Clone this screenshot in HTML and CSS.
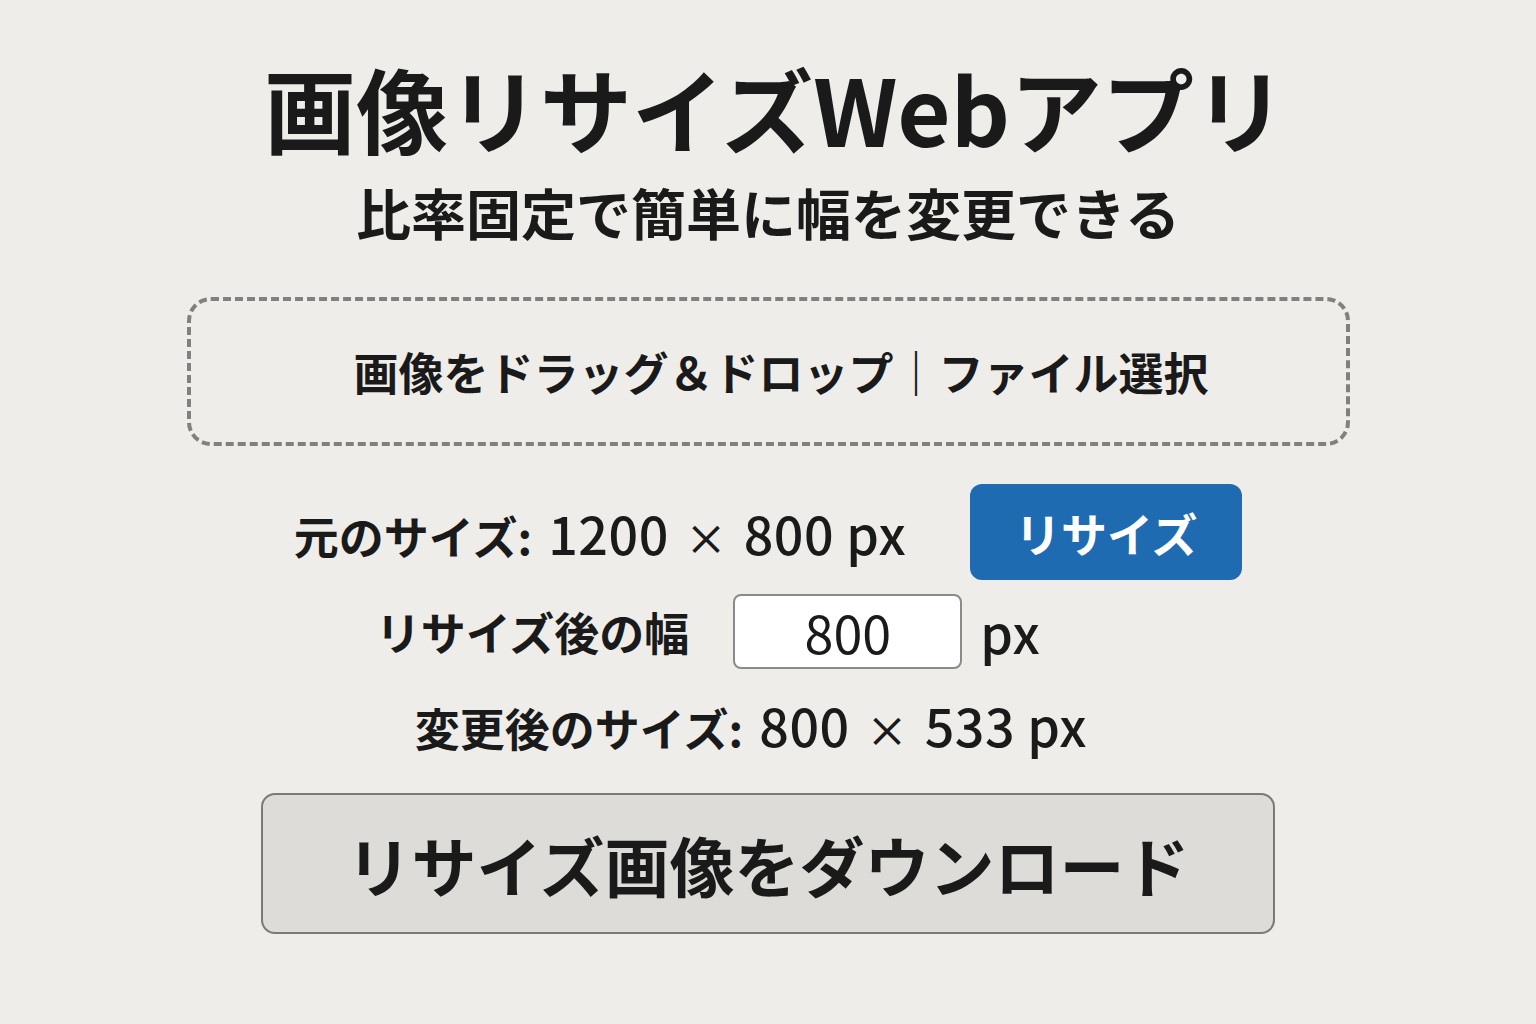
FILE: index.html
```html
<!DOCTYPE html>
<html lang="ja">
<head>
	<meta charset="utf-8"/>
	<title>画像リサイズWebアプリ</title>
	<link rel="stylesheet" href="styles.css">
</head>
<body>
	<div class="page">
		<h1 class="title">画像リサイズWebアプリ</h1>
		<p class="sub">比率固定で簡単に幅を変更できる</p>
		<div class="drop">画像をドラッグ＆ドロップ｜ファイル選択</div>
		<div class="row row1">
			<span class="txt">元のサイズ: <span class="n">1200 <span class="x">×</span> 800 px</span></span>
			<button class="btn-blue">リサイズ</button>
		</div>
		<div class="row row2">
			<label class="txt">リサイズ後の幅</label>
			<input class="num" type="text" value="800">
			<span class="txt n">px</span>
		</div>
		<div class="row row3">
			<span class="txt">変更後のサイズ: <span class="n">800 <span class="x">×</span> 533 px</span></span>
		</div>
		<button class="btn-dl">リサイズ画像をダウンロード</button>
	</div>
</body>
</html>
```

FILE: styles.css
```css
html, body{height: 100%;}
body{margin: 0;background-color: #eeede9;color: #1a1a1a;font-family: "Noto Sans CJK JP", "Noto Sans", sans-serif;}
.page{width: 1163px;margin: 0 auto;padding-top: 61px;display: flex;flex-direction: column;align-items: center;}
.title{margin: 0 0 0 14px;font-size: 92px;line-height: 91px;font-weight: 700;}
.sub{margin: 32px 0 0;font-size: 55px;line-height: 54px;font-weight: 700;}
.drop{margin-top: 59px;width: 100%;height: 149px;box-sizing: border-box;border: 4px dashed #80807e;border-radius: 24px;padding-left: 26px;
	display: flex;align-items: center;justify-content: center;font-size: 45px;font-weight: 700;}
.row{display: flex;align-items: center;justify-content: center;}
.txt{font-size: 45px;font-weight: 700;}
.n{font-size: 52px;font-weight: 500;margin-left: 6px;letter-spacing: 0.5px;}
.x{font-size: 42px;margin: 0 4px;}
.row1{margin-top: 38px;}
.row1 > .txt{margin-right: 64px;}
.btn-blue{width: 272px;height: 96px;border: none;border-radius: 12px;background-color: #1f6bb2;color: #ffffff;
	font-family: inherit;font-size: 46px;font-weight: 700;}
.row2{margin-top: 14px;padding-right: 120px;}
.row2 label{margin-right: 44px;}
.row2 .n{margin-left: 0;}
.num{width: 229px;height: 75px;box-sizing: border-box;border: 2px solid #8a8a88;border-radius: 8px;background: #ffffff;
	text-align: center;font-family: inherit;font-size: 52px;color: #1a1a1a;margin-right: 18px;padding: 0;}
.row3{margin-top: 18px;padding-right: 34px;}
.btn-dl{margin-top: 31px;width: 1014px;height: 141px;border: 2px solid #7a7a78;border-radius: 14px;background-color: #dddcd8;
	font-family: inherit;font-size: 65px;font-weight: 700;color: #1a1a1a;}
```
